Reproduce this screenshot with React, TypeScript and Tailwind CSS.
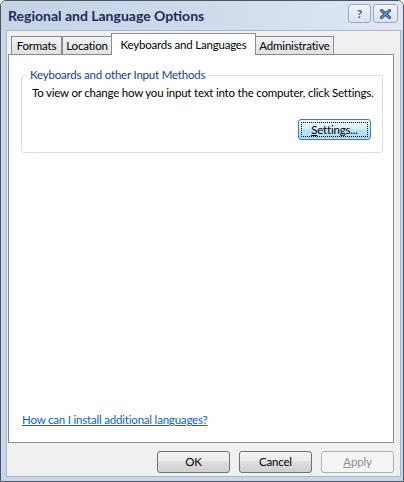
import React from "react";

const font = { fontFamily: 'Lato, "Noto Sans", Arial, sans-serif' };

const Tab = ({ label, active, w }: { label: string; active?: boolean; w: string }) => (
  <div
    className={
      active
        ? `relative z-10 -mb-px h-[22px] ${w} -mx-[1px] border border-b-0 border-[#898c95] bg-white flex items-start justify-center pt-[2px] text-black whitespace-nowrap`
        : `h-[18px] ${w} border border-b-0 border-[#898c95] bg-gradient-to-b from-[#f3f3f3] to-[#e1e1e1] flex items-center justify-center text-black whitespace-nowrap`
    }
  >
    {label}
  </div>
);

const WinButton = ({ children, disabled }: { children: React.ReactNode; disabled?: boolean }) => (
  <div
    className={
      disabled
        ? "w-[73px] h-[22px] rounded-[3px] border border-[#adb2b5] bg-[#f4f4f4] flex items-center justify-center text-[#8d8d8d]"
        : "w-[73px] h-[22px] rounded-[3px] border border-[#707070] bg-[linear-gradient(#f2f2f2_0%,#ebebeb_45%,#dddddd_50%,#cfcfcf_100%)] flex items-center justify-center text-black"
    }
  >
    {children}
  </div>
);

export default function App() {
  return (
    <div
      style={font}
      className="w-[404px] h-[482px] flex flex-col bg-[#c9d6e9] border border-[#4b5566] rounded-t-[6px] overflow-hidden text-[11.5px] tracking-[-0.2px]"
    >
      {/* title bar */}
      <div className="h-[29px] flex items-center pl-[7px] pr-[5px] bg-gradient-to-r from-[#c5d3e7] via-[#cfdbec] to-[#dfe7f3]">
        <div className="text-[14px] font-bold text-[#1d2b5c] leading-none tracking-[0px] whitespace-nowrap">
          Regional and Language Options
        </div>
        <div className="ml-auto flex gap-[2px] self-start mt-[3px]">
          <div className="w-[23px] h-[19px] rounded-[3px] border border-[#9aa8bd] bg-gradient-to-b from-[#f2f5fa] to-[#d9e2ee] flex items-center justify-center text-[12px] font-bold text-[#2e5aa5]">
            ?
          </div>
          <div className="w-[25px] h-[19px] rounded-[3px] border border-[#9aa8bd] bg-gradient-to-b from-[#f2f5fa] to-[#d9e2ee] flex items-center justify-center">
            <svg width="11" height="10" viewBox="0 0 11 10">
              <path d="M1.5 1.5 L9.5 8.5 M9.5 1.5 L1.5 8.5" stroke="#24406f" strokeWidth="3" strokeLinecap="square" />
              <path d="M1.5 1.5 L9.5 8.5 M9.5 1.5 L1.5 8.5" stroke="#6f9bd6" strokeWidth="1.4" strokeLinecap="square" />
            </svg>
          </div>
        </div>
      </div>

      {/* client area */}
      <div className="flex-1 ml-[5px] mr-[2px] mb-[4px] bg-[#f0f0f0] border border-[#a9b7cb] flex flex-col pl-[1px] pr-[6px]">
        <div className="h-[23px] flex items-end pl-[3px]">
          <Tab label="Formats" w="w-[51px]" />
          <Tab label="Location" w="w-[50px]" />
          <Tab label="Keyboards and Languages" w="w-[145px]" active />
          <Tab label="Administrative" w="w-[79px]" />
        </div>

        <div className="h-[389px] border border-[#898c95] bg-white flex flex-col pl-[12px] pr-[10px] pt-[20px] pb-[13px]">
          <div className="relative h-[78px] border border-[#d5dfe5] rounded-[3px] flex flex-col">
            <div className="absolute -top-[10px] left-[5px] px-[3px] bg-white text-[#1e3a8a] leading-[18px] whitespace-nowrap">
              Keyboards and other Input Methods
            </div>
            <div className="mt-[8px] ml-[10px] leading-[18px] text-black whitespace-nowrap">
              To view or change how you input text into the computer, click Settings.
            </div>
            <div className="self-end mr-[11px] mt-[17px] w-[73px] h-[21px] rounded-[3px] border border-[#3c7fb1] bg-[linear-gradient(#eaf6fd_0%,#d9f0fc_45%,#bee6fd_50%,#a7d9f5_100%)] p-[2px]">
              <div className="w-full h-full border border-dotted border-black flex items-center justify-center text-black">
                <span>
                  <span className="underline">S</span>ettings...
                </span>
              </div>
            </div>
          </div>
          <div className="mt-auto ml-[1px] leading-[18px] text-[#0066cc] underline whitespace-nowrap">
            How can I install additional languages?
          </div>
        </div>

        <div className="mt-[8px] flex justify-end gap-[9px]">
          <WinButton>OK</WinButton>
          <WinButton>Cancel</WinButton>
          <WinButton disabled>
            <span>
              <span className="underline">A</span>pply
            </span>
          </WinButton>
        </div>
      </div>
    </div>
  );
}
